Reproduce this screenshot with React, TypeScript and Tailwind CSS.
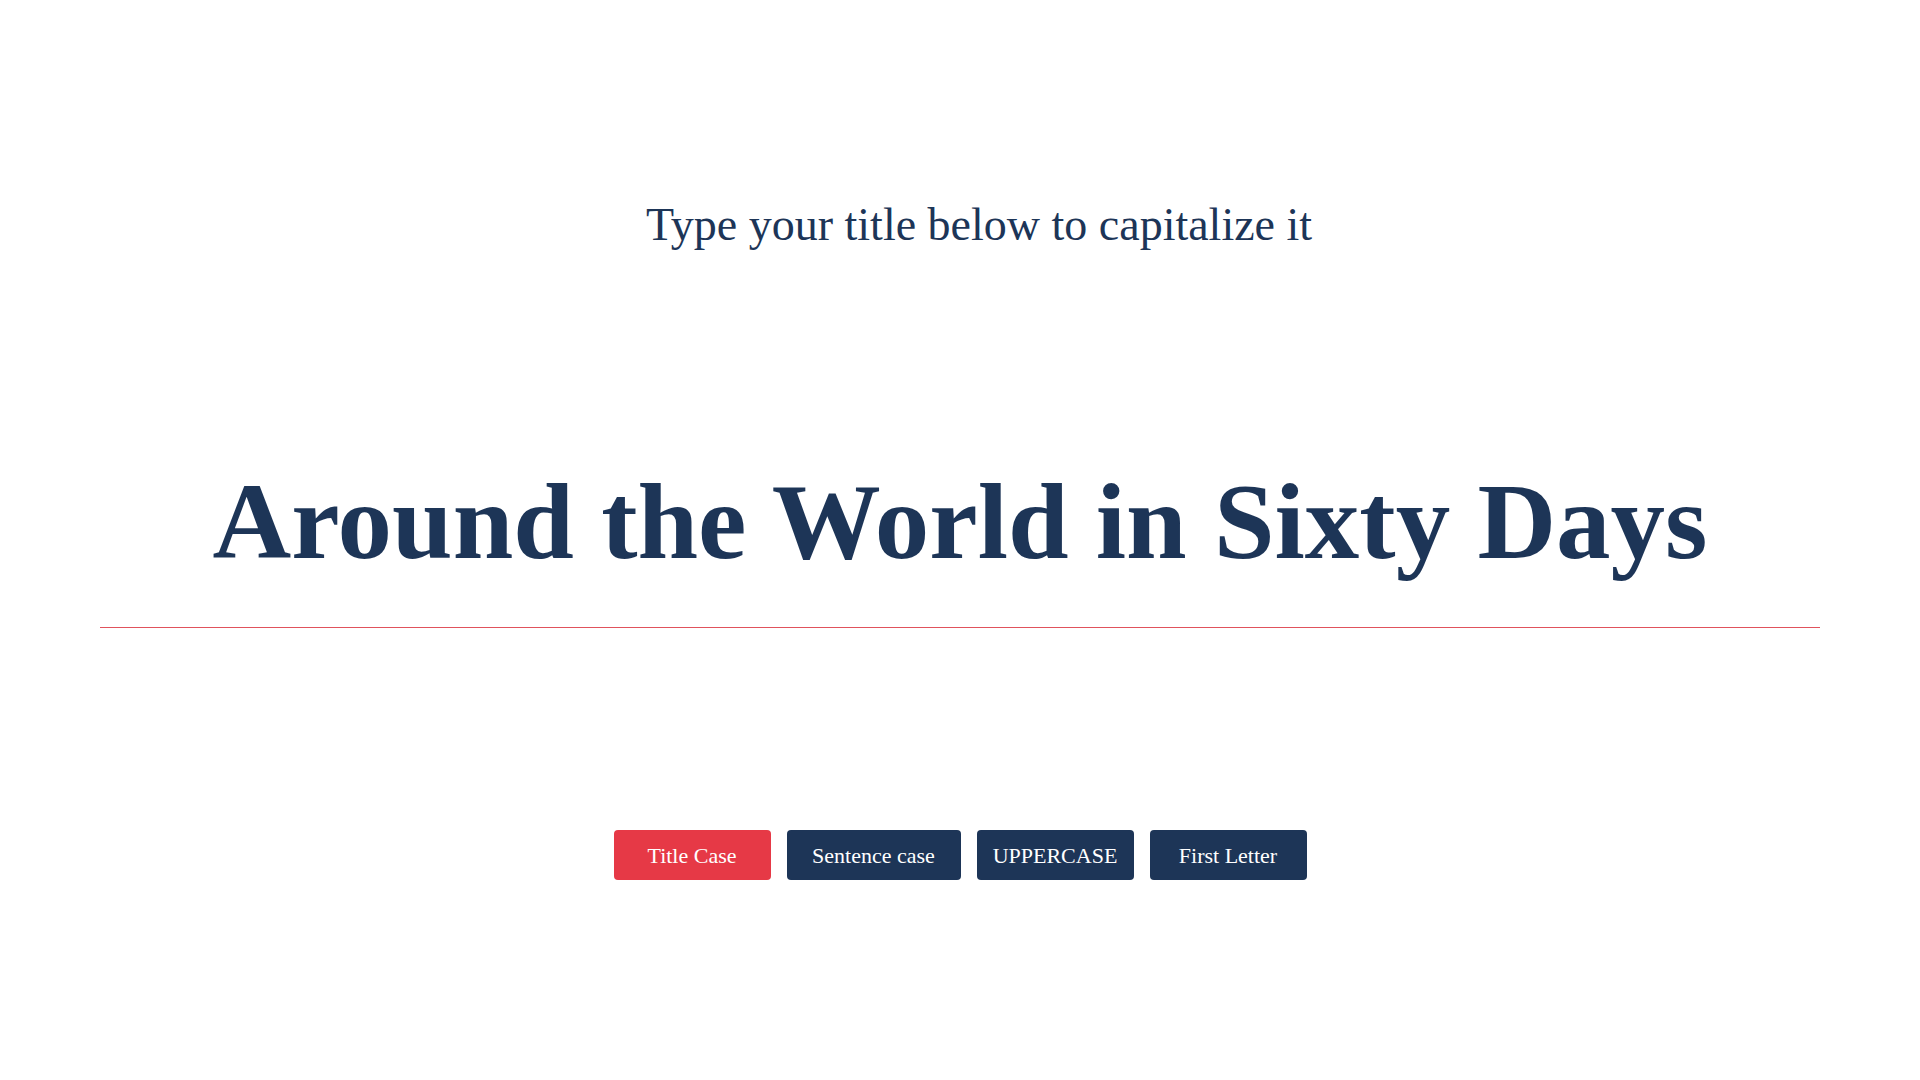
const buttons = [
  { label: 'Title Case', active: true, width: 'w-[157px]' },
  { label: 'Sentence case', active: false, width: 'w-[174px]' },
  { label: 'UPPERCASE', active: false, width: 'w-[157px]' },
  { label: 'First Letter', active: false, width: 'w-[157px]' },
];

export default function App() {
  return (
    <div className="min-h-screen bg-white text-[#1d3557] font-['Liberation_Serif',serif]">
      <div className="flex flex-col items-center px-[100px]">
        <p className="mt-[197px] pl-[38px] text-[46px] leading-[56px]">Type your title below to capitalize it</p>

        <div className="mt-[209px] w-full border-b border-[#e0525c] pb-[45px] text-center">
          <h1 className="text-[109px] font-bold leading-[120px]">Around the World in Sixty Days</h1>
        </div>

        <div className="mt-[202px] flex gap-[16px]">
          {buttons.map((b) => (
            <button
              key={b.label}
              className={`h-[50px] ${b.width} rounded-[4px] text-[22px] text-white ${
                b.active ? 'bg-[#e63946]' : 'bg-[#1d3557]'
              }`}
            >
              {b.label}
            </button>
          ))}
        </div>
      </div>
    </div>
  );
}
